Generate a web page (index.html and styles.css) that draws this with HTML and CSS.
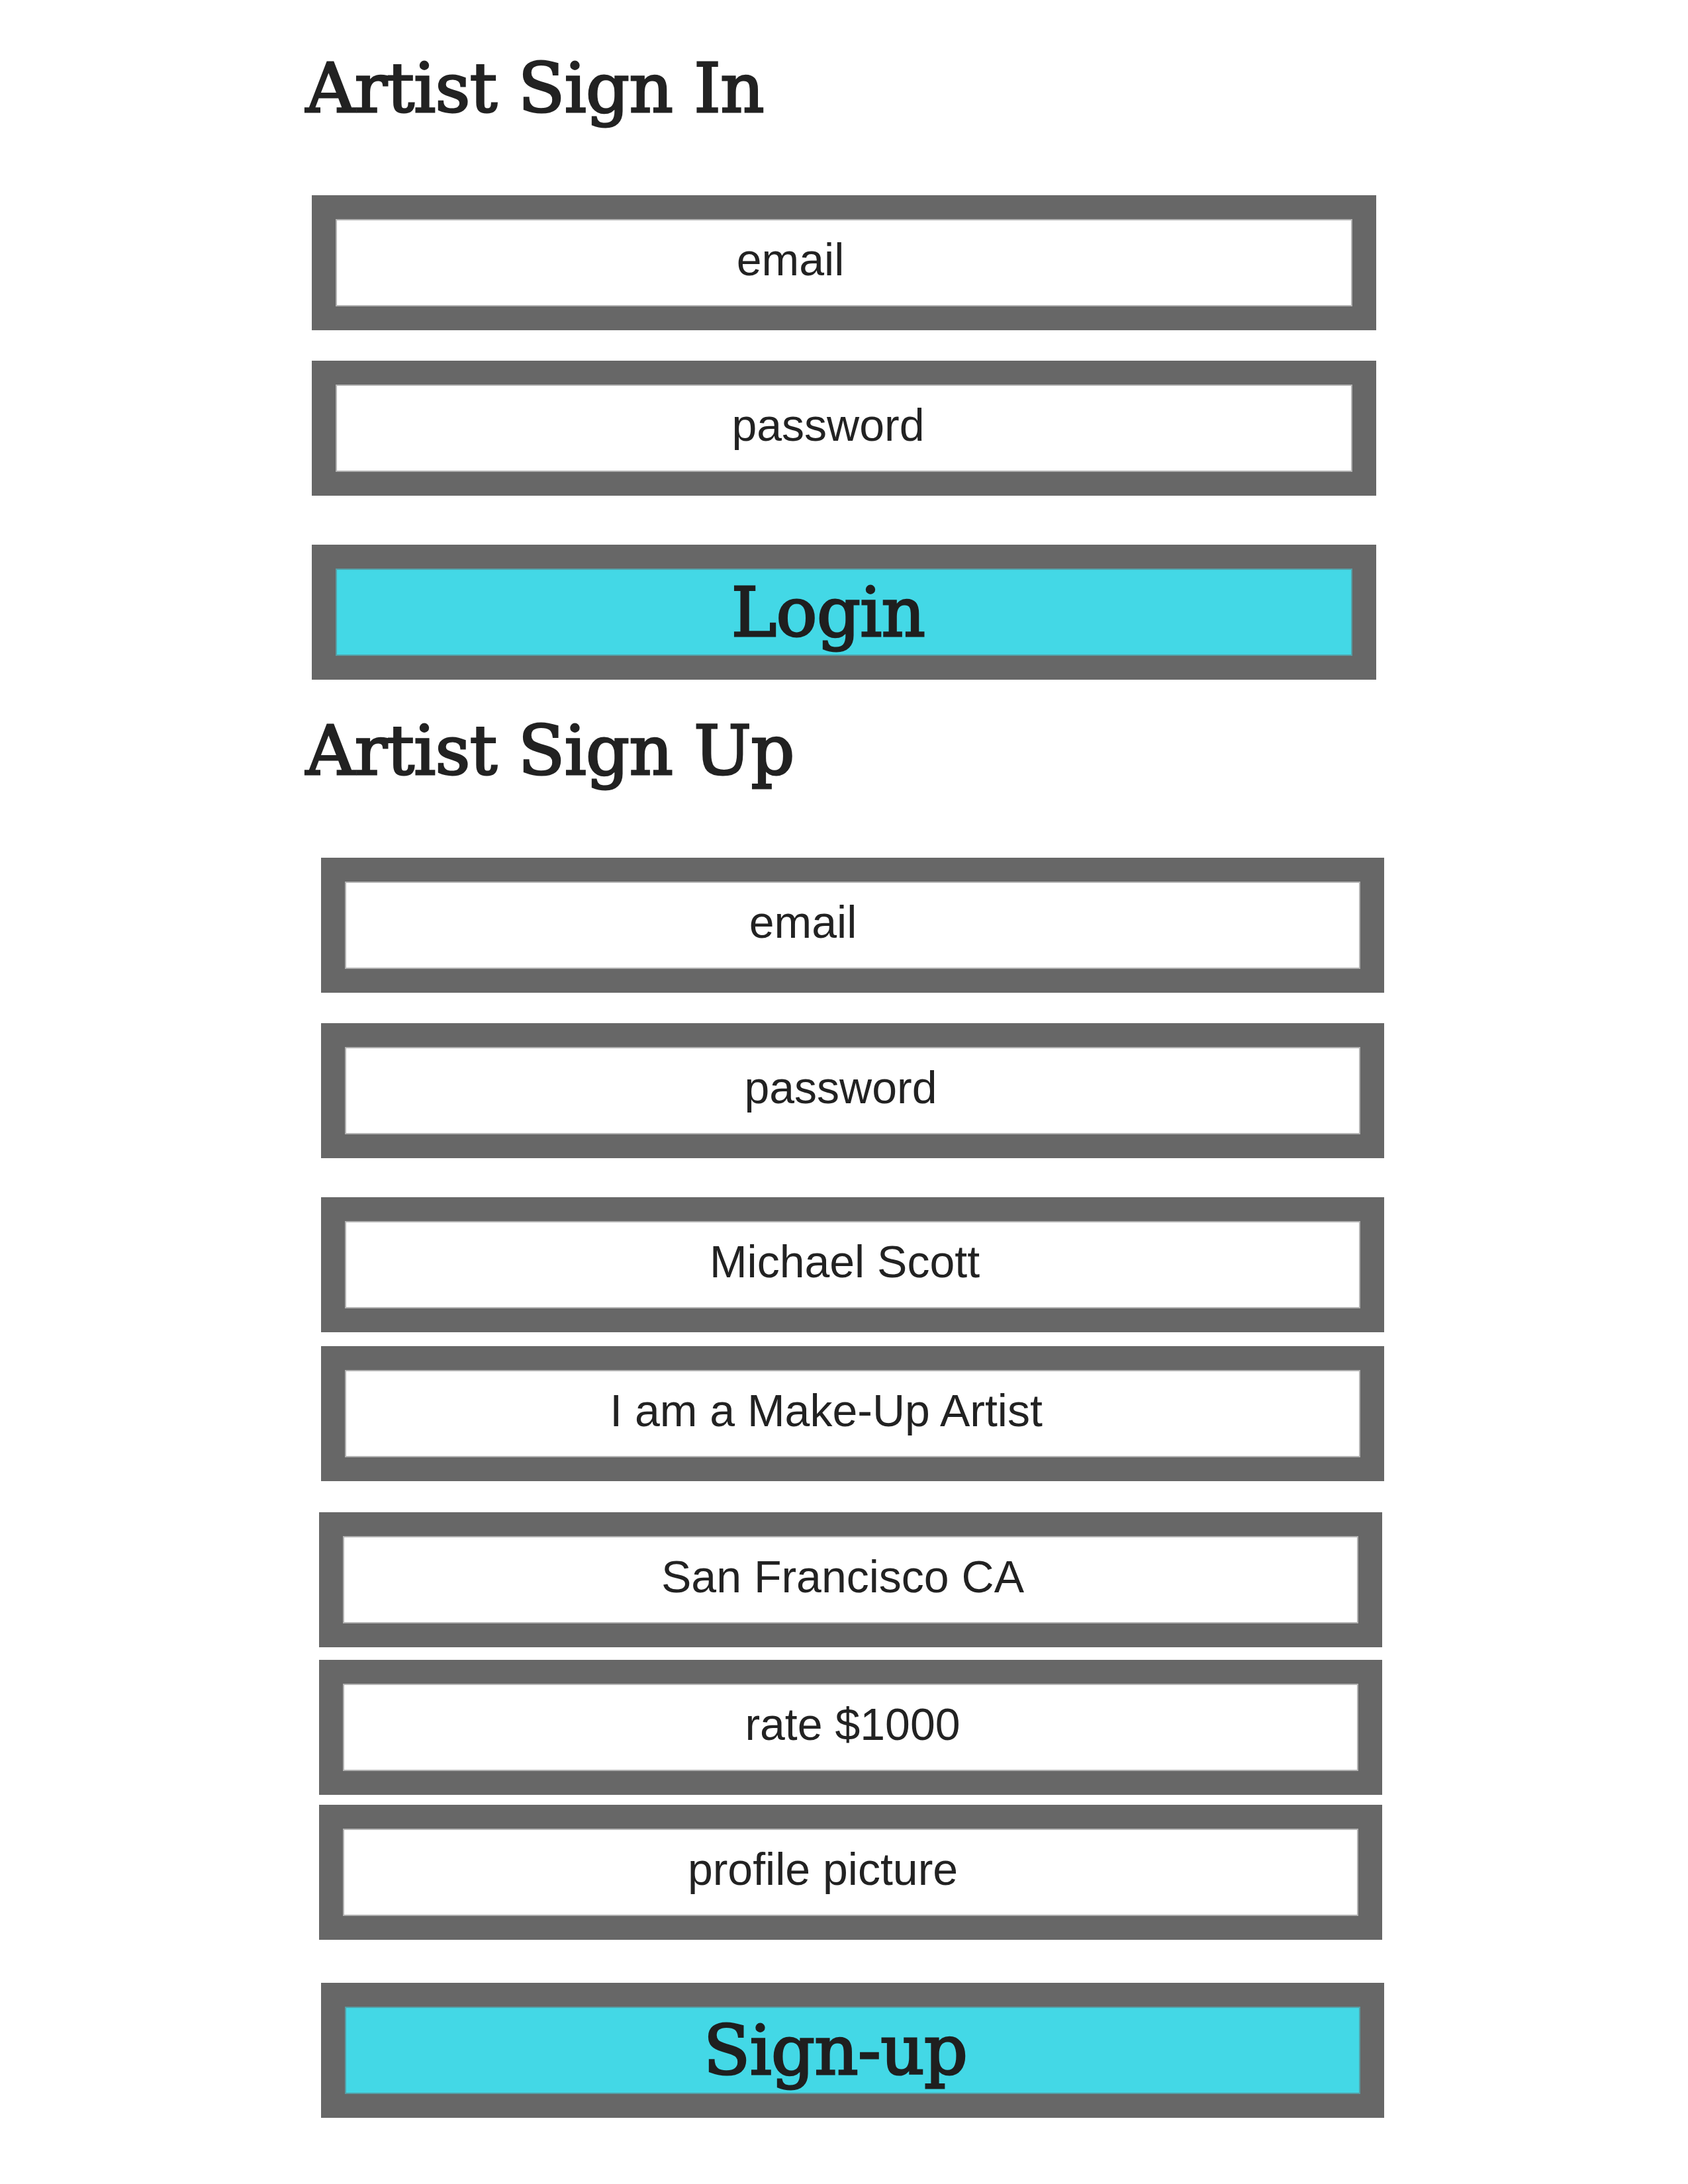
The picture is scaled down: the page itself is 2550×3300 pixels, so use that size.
FILE: index.html
```html
<!DOCTYPE html>
<html lang="en">
<head>
<meta charset="utf-8">
<title>Artist Sign In</title>
<link rel="stylesheet" href="styles.css">
</head>
<body>
<main class="page">
  <section class="block block-in">
    <h1 class="title">Artist Sign In</h1>
    <div class="field first"><div class="field-inner lbl-in-email">email</div></div>
    <div class="field gap-46"><div class="field-inner lbl-in-pass">password</div></div>
    <div class="field btn gap-74"><div class="field-inner lbl-login">Login</div></div>
  </section>
  <section class="block block-up">
    <h2 class="title">Artist Sign Up</h2>
    <div class="field first"><div class="field-inner lbl-up-email">email</div></div>
    <div class="field gap-46"><div class="field-inner lbl-up-pass">password</div></div>
    <div class="field gap-59"><div class="field-inner lbl-name">Michael Scott</div></div>
    <div class="field gap-21"><div class="field-inner lbl-bio">I am a Make-Up Artist</div></div>
    <div class="field nudge gap-47"><div class="field-inner lbl-city">San Francisco CA</div></div>
    <div class="field nudge gap-19"><div class="field-inner lbl-rate">rate $1000</div></div>
    <div class="field nudge gap-15"><div class="field-inner lbl-pic">profile picture</div></div>
    <div class="field btn gap-65"><div class="field-inner lbl-signup">Sign-up</div></div>
  </section>
</main>
</body>
</html>
```

FILE: styles.css
```css
html, body {
  margin: 0;
  padding: 0;
  background: #ffffff;
}

.page {
  padding: 82px 0 0 458px;
  display: flex;
  flex-direction: column;
  color: #222222;
}

.block {
  display: flex;
  flex-direction: column;
  align-items: flex-start;
}

.block-up {
  margin-top: 56px;
}

.title {
  margin: 0 0 0 4px;
  font-family: "DejaVu Serif", "Liberation Serif", serif;
  font-weight: normal;
  font-size: 103px;
  line-height: 103px;
  letter-spacing: -0.6px;
  color: #222222;
  -webkit-text-stroke: 3px #222222;
  white-space: nowrap;
}

.field {
  box-sizing: border-box;
  width: 1606px;
  height: 204px;
  border: 36px solid #676767;
  background: #ffffff;
  box-shadow: inset 0 0 0 2px rgba(103, 103, 103, 0.5);
}

.block-in .field {
  margin-left: 13px;
  width: 1608px;
}

.block-up .field {
  margin-left: 27px;
}

.block-up .field.nudge {
  margin-left: 24px;
}

.field.first {
  margin-top: 110px;
}

.gap-15 { margin-top: 15px; }
.gap-19 { margin-top: 19px; }
.gap-21 { margin-top: 21px; }
.gap-46 { margin-top: 46px; }
.gap-47 { margin-top: 47px; }
.gap-59 { margin-top: 59px; }
.gap-65 { margin-top: 65px; }
.gap-74 { margin-top: 74px; }

.field-inner {
  box-sizing: border-box;
  height: 132px;
  padding-bottom: 9px;
  font-family: "Liberation Sans", Arial, sans-serif;
  font-size: 68px;
  line-height: 123px;
  text-align: center;
  white-space: nowrap;
  color: #222222;
}

.field.btn {
  background: #43d8e6;
}

.field.btn .field-inner {
  padding-bottom: 0;
  font-family: "DejaVu Serif", "Liberation Serif", serif;
  font-size: 103px;
  line-height: 132px;
  letter-spacing: -0.6px;
  color: #1f1f1f;
  -webkit-text-stroke: 3px #1f1f1f;
}

/* per-label horizontal placement of the centred text */
.lbl-in-email { padding-right: 162px; }
.lbl-in-pass { padding-right: 48px; }
.lbl-login { padding-right: 48px; }
.lbl-up-email { padding-right: 150px; }
.lbl-up-pass { padding-right: 36px; }
.lbl-name { padding-right: 24px; }
.lbl-bio { padding-right: 80px; }
.lbl-city { padding-right: 24px; }
.lbl-rate { padding-left: 6px; }
.lbl-pic { padding-right: 84px; }
.lbl-signup { padding-right: 52px; }
```
